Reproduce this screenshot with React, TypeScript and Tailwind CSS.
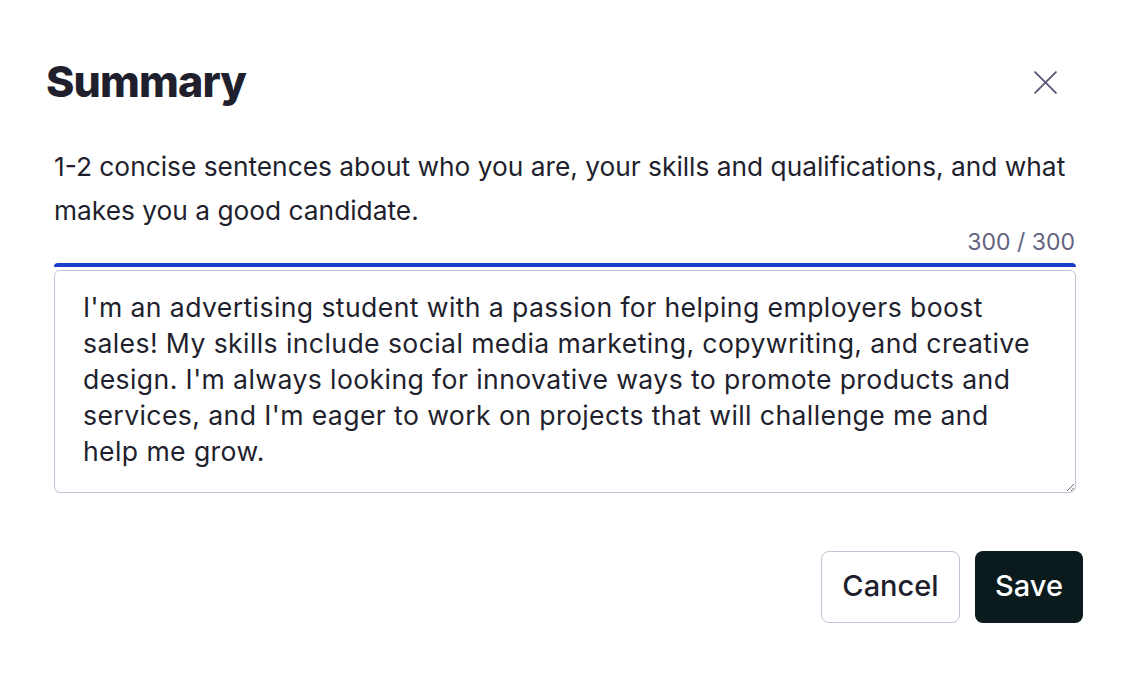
import React from 'react';

const summary = [
    "I'm an advertising student with a passion for helping employers boost",
    'sales! My skills include social media marketing, copywriting, and creative',
    "design. I'm always looking for innovative ways to promote products and",
    "services, and I'm eager to work on projects that will challenge me and",
    'help me grow.',
].join('\n');

function CloseIcon() {
    return (
        <svg width="25" height="25" viewBox="0 0 24 24" fill="none" stroke="currentColor" strokeWidth={1.8} strokeLinecap="round">
            <path d="M2 2 L22 22 M22 2 L2 22" />
        </svg>
    );
}

export default function App() {
    return (
        <div
            className="w-[1128px] h-[674px] bg-white text-[#1f1f2e] px-[54px] pt-[56px]"
            style={{ fontFamily: 'Inter, "Noto Sans", sans-serif' }}
        >
            <div className="flex items-center justify-between">
                <h2 className="-ml-[8px] text-[43px] leading-[50px] font-extrabold tracking-[-0.02em]">Summary</h2>
                <button className="mr-[16px] mt-[2px] text-[#5a5a78]" aria-label="Close">
                    <CloseIcon />
                </button>
            </div>

            <p className="mt-[39px] w-[1024px] text-[26.3px] leading-[44px]">
                1-2 concise sentences about who you are, your skills and qualifications, and what makes you a good candidate.
            </p>

            <div className="flex justify-end text-[23px] leading-[30px] text-[#63637f] -mt-[6px] -mr-[1px]">300 / 300</div>

            <div className="mt-[6px] w-[1022px]">
                <div className="h-[4px] rounded-t-[6px] bg-[#1c3fc9]" />
                <textarea
                    defaultValue={summary}
                    className="mt-[3px] block w-full h-[223px] resize-y rounded-[6px] border border-[#c3c3d6] pl-[28px] pr-[10px] pt-[18px] pb-[20px] text-[26.6px] leading-[36px] tracking-[0.015em] text-[#1f1f2e] outline-none"
                />
            </div>

            <div className="mt-[58px] flex justify-end gap-[15px] -mr-[9px]">
                <button className="h-[72px] w-[139px] pb-[2px] rounded-[8px] border border-[#c3c3d6] bg-white text-[29px] font-medium text-[#1f1f2e]">
                    Cancel
                </button>
                <button className="h-[72px] w-[108px] pb-[2px] rounded-[8px] bg-[#0b1a1d] text-[29px] font-medium text-white">
                    Save
                </button>
            </div>
        </div>
    );
}
